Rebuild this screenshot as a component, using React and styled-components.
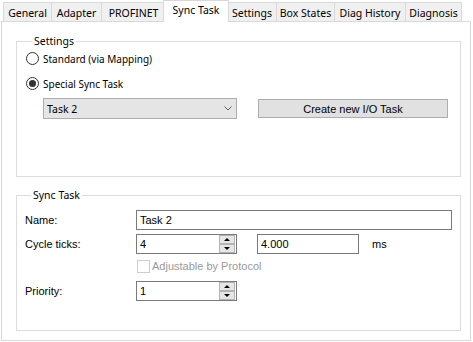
import React from "react";
import styled, { createGlobalStyle } from "styled-components";

const uiFont = `"Noto Sans", "DejaVu Sans", sans-serif`;
const formFont = `"Liberation Sans", Arial, sans-serif`;

const GlobalStyle = createGlobalStyle`
  body {
    margin: 0;
    background: #fff;
    color: #000;
    font-family: ${uiFont};
    font-size: 10px;
  }
  * { box-sizing: border-box; }
`;

const Window = styled.div`
  width: 473px;
  height: 342px;
  overflow: hidden;
  background: #fff;
`;

const TabStrip = styled.div`
  display: flex;
  align-items: flex-end;
  height: 22px;
  padding-left: 3px;
  position: relative;
  z-index: 1;
`;

const Tab = styled.div`
  width: ${(p) => p.$w}px;
  height: ${(p) => (p.$active ? 22 : 19)}px;
  margin: ${(p) => (p.$active ? "0 -2px" : "0 0 1px 0")};
  padding-top: ${(p) => (p.$active ? 2 : 3)}px;
  line-height: 15px;
  text-align: center;
  white-space: nowrap;
  font-family: ${uiFont};
  font-size: 10.5px;
  background: ${(p) => (p.$active ? "#fff" : "#f0f0f0")};
  border: 1px solid #d9d9d9;
  border-bottom: none;
  border-right: ${(p) => (p.$last || p.$active ? "1px solid #d9d9d9" : "none")};
  position: relative;
  z-index: ${(p) => (p.$active ? 2 : 1)};
`;

const Panel = styled.div`
  margin: -1px 0 0 1px;
  width: 470px;
  height: 320px;
  border: 1px solid #d9d9d9;
  background: #fff;
  padding: 11px 0 0 14px;
  display: flex;
  flex-direction: column;
  gap: 10px;
`;

const GroupBox = styled.fieldset`
  width: 445px;
  height: 144px;
  margin: 0;
  min-width: 0;
  padding: 0 0 0 ${(p) => p.$pad}px;
  border: 1px solid #dcdcdc;
  display: flex;
  flex-direction: column;
`;

const Legend = styled.legend`
  margin-left: 6px;
  padding: 0 2px;
  line-height: 16px;
  font-family: ${uiFont};
  font-size: 10.5px;
`;

const RadioRow = styled.label`
  display: flex;
  align-items: center;
  height: 17px;
  margin-top: ${(p) => p.$top}px;
  gap: 4px;
  font-family: ${uiFont};
  font-size: 10px;
`;

const RadioDot = styled.span`
  width: 13px;
  height: 13px;
  border-radius: 50%;
  border: 1px solid #333;
  background: #fff;
  display: flex;
  align-items: center;
  justify-content: center;
  &::after {
    content: "";
    width: 7px;
    height: 7px;
    border-radius: 50%;
    background: ${(p) => (p.$checked ? "#333" : "transparent")};
  }
`;

const ChooserRow = styled.div`
  display: flex;
  align-items: center;
  height: 21px;
  margin: 6px 0 0 17px;
`;

const Combo = styled.div`
  width: 194px;
  height: 21px;
  border: 1px solid #adadad;
  background: #e5e5e5;
  display: flex;
  align-items: center;
  justify-content: space-between;
  padding: 0 4px 0 3px;
  font-family: ${uiFont};
  font-size: 10.5px;
`;

const Button = styled.div`
  width: 190px;
  height: 19px;
  margin-left: 21px;
  border: 1px solid #adadad;
  background: #e1e1e1;
  display: flex;
  align-items: center;
  justify-content: center;
  font-family: ${formFont};
  font-size: 11px;
`;

const FieldRow = styled.div`
  display: flex;
  align-items: center;
  height: 20px;
  margin-top: ${(p) => p.$top}px;
  font-family: ${formFont};
  font-size: 11px;
`;

const Label = styled.span`
  width: 111px;
  flex-shrink: 0;
`;

const TextBox = styled.div`
  width: ${(p) => p.$w}px;
  height: 20px;
  margin-left: ${(p) => p.$left || 0}px;
  border: 1px solid #7a7a7a;
  background: #fff;
  display: flex;
  align-items: center;
  padding: 0 1px 0 3px;
  line-height: 18px;
`;

const TextValue = styled.span`
  flex: 1;
`;

const Spin = styled.div`
  width: 16px;
  height: 18px;
  display: flex;
  flex-direction: column;
`;

const SpinButton = styled.div`
  flex: 1;
  border: 1px solid #b4b4b4;
  background: #e6e6e6;
  display: flex;
  align-items: center;
  justify-content: center;
  &::after {
    content: "";
    border-left: 3px solid transparent;
    border-right: 3px solid transparent;
    ${(p) =>
      p.$down ? "border-top: 3px solid #000;" : "border-bottom: 3px solid #000;"}
  }
`;

const Unit = styled.span`
  margin-left: 13px;
`;

const CheckRow = styled.div`
  display: flex;
  align-items: center;
  height: 16px;
  margin: 4px 0 0 112px;
  gap: 2px;
  font-family: ${formFont};
  font-size: 11px;
  color: #9a9a9a;
`;

const CheckBox = styled.span`
  width: 13px;
  height: 13px;
  border: 1px solid #cccccc;
  background: #fff;
`;

const tabs = [
  ["General", 48],
  ["Adapter", 50],
  ["PROFINET", 64],
  ["Sync Task", 62],
  ["Settings", 49],
  ["Box States", 58],
  ["Diag History", 71],
  ["Diagnosis", 57],
];

function Chevron() {
  return (
    <svg width="8" height="5" viewBox="0 0 8 5">
      <path d="M0.5 0.5 L4 4 L7.5 0.5" fill="none" stroke="#606060" strokeWidth="1" />
    </svg>
  );
}

function SpinBox({ value, width }) {
  return (
    <TextBox $w={width}>
      <TextValue>{value}</TextValue>
      <Spin>
        <SpinButton />
        <SpinButton $down />
      </Spin>
    </TextBox>
  );
}

export default function App() {
  return (
    <Window>
      <GlobalStyle />
      <TabStrip>
        {tabs.map(([name, w], i) => (
          <Tab
            key={name}
            $w={name === "Sync Task" ? w + 4 : w}
            $active={name === "Sync Task"}
            $last={i === tabs.length - 1}
          >
            {name}
          </Tab>
        ))}
      </TabStrip>
      <Panel>
        <GroupBox $pad={9}>
          <Legend>Settings</Legend>
          <RadioRow $top={1}>
            <RadioDot />
            Standard (via Mapping)
          </RadioRow>
          <RadioRow $top={8}>
            <RadioDot $checked />
            Special Sync Task
          </RadioRow>
          <ChooserRow>
            <Combo>
              <span>Task 2</span>
              <Chevron />
            </Combo>
            <Button>Create new I/O Task</Button>
          </ChooserRow>
        </GroupBox>
        <GroupBox $pad={8}>
          <Legend>Sync Task</Legend>
          <FieldRow $top={7}>
            <Label>Name:</Label>
            <TextBox $w={316}>Task 2</TextBox>
          </FieldRow>
          <FieldRow $top={4}>
            <Label>Cycle ticks:</Label>
            <SpinBox value="4" width={101} />
            <TextBox $w={102} $left={20}>4.000</TextBox>
            <Unit>ms</Unit>
          </FieldRow>
          <CheckRow>
            <CheckBox />
            Adjustable by Protocol
          </CheckRow>
          <FieldRow $top={7}>
            <Label>Priority:</Label>
            <SpinBox value="1" width={101} />
          </FieldRow>
        </GroupBox>
      </Panel>
    </Window>
  );
}
